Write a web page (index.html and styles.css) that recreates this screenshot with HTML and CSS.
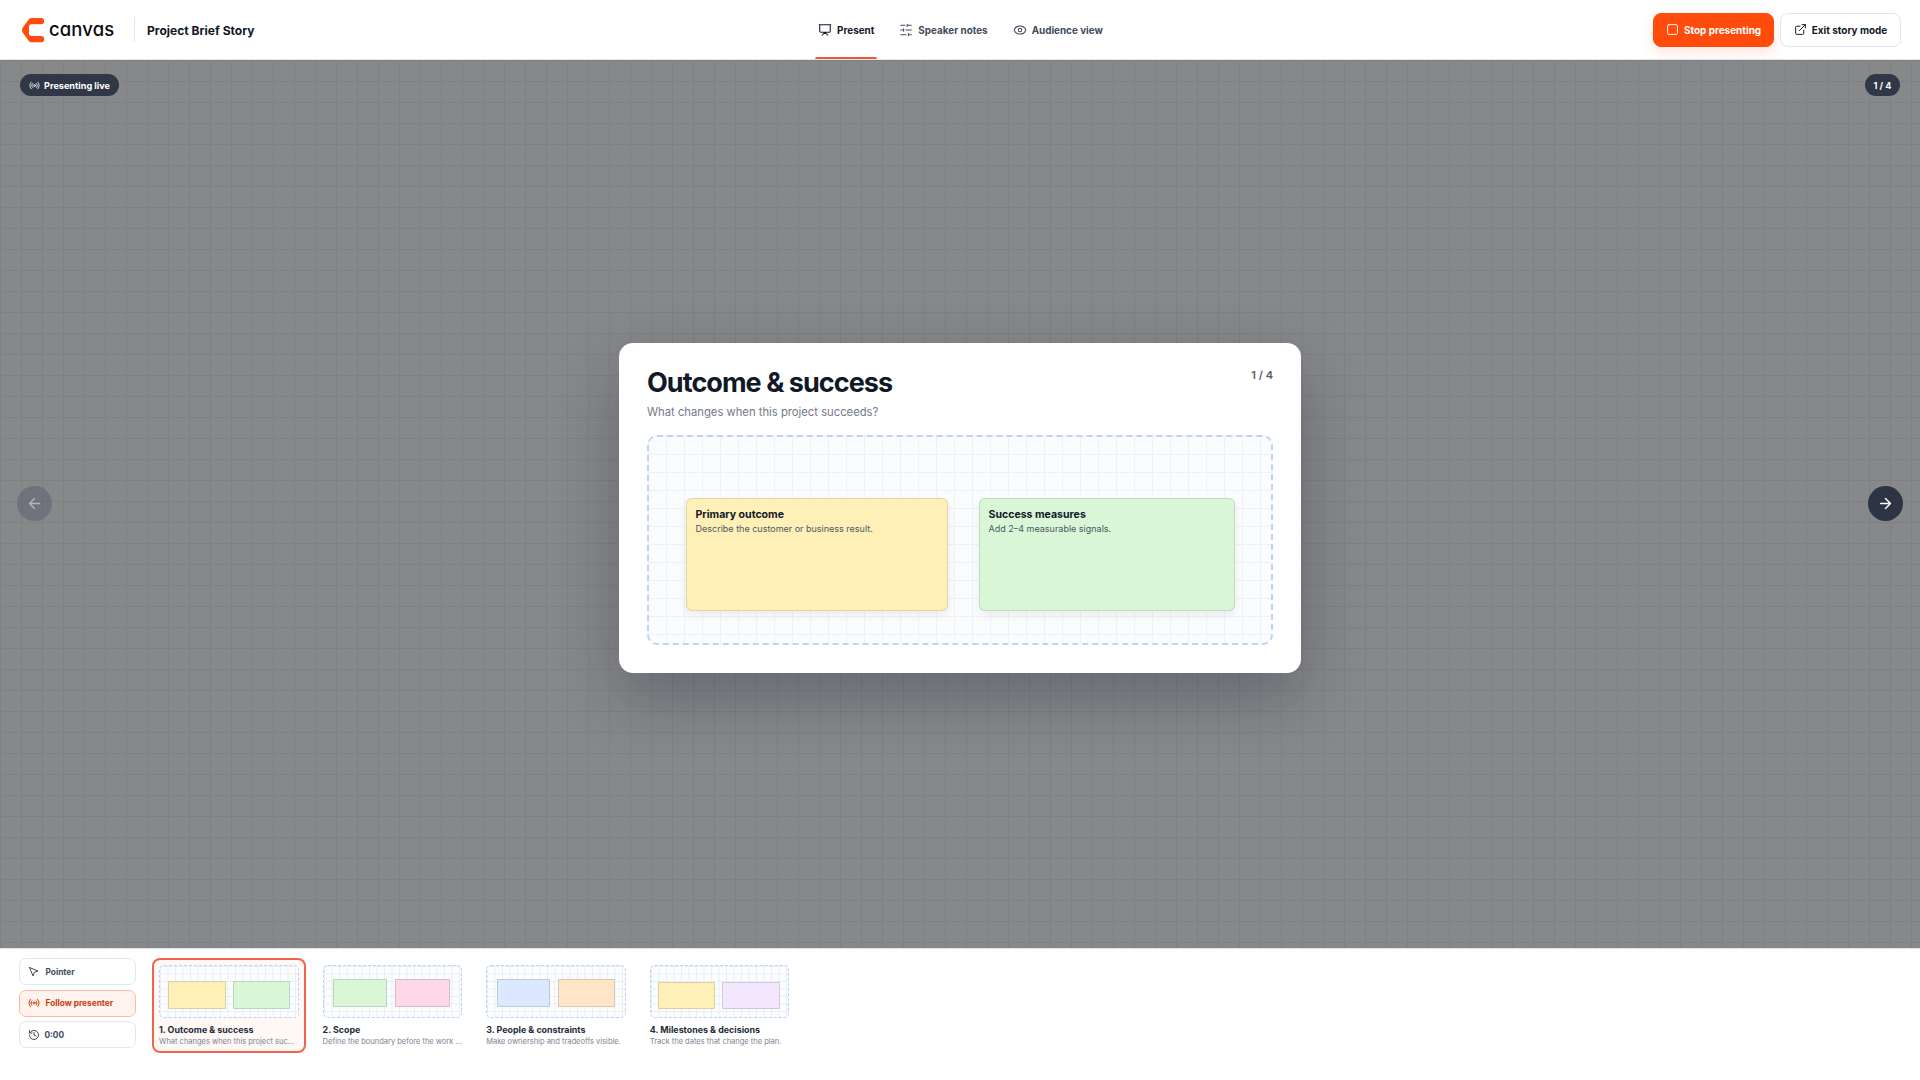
FILE: index.html
```html
<!DOCTYPE html>
<html lang="en">
<head>
<meta charset="utf-8">
<title>Project Brief Story</title>
<link rel="stylesheet" href="styles.css">
</head>
<body>
<svg class="sprite" aria-hidden="true">
  <symbol id="live" viewBox="0 0 24 24"><circle cx="12" cy="12" r="2"/><path d="M4.9 19.1C1 15.2 1 8.8 4.9 4.9M7.8 16.2c-2.3-2.3-2.3-6.1 0-8.5M16.2 7.8c2.3 2.3 2.3 6.1 0 8.5M19.1 4.9C23 8.8 23 15.1 19.1 19"/></symbol>
  <symbol id="screen" viewBox="0 0 24 24"><path d="M2 3h20M21 3v11a2 2 0 0 1-2 2H5a2 2 0 0 1-2-2V3M7 21l5-5 5 5"/></symbol>
  <symbol id="sliders" viewBox="0 0 24 24"><path d="M21 4h-7M10 4H3M21 12h-9M8 12H3M21 20h-5M12 20H3M14 2v4M8 10v4M16 18v4"/></symbol>
  <symbol id="eye" viewBox="0 0 24 24"><path d="M2.060 12.350a1 1 0 0 1 0-.7 10.750 10.750 0 0 1 19.880 0 1 1 0 0 1 0 .7 10.750 10.750 0 0 1-19.880 0"/><circle cx="12" cy="12" r="3"/></symbol>
  <symbol id="stop" viewBox="0 0 24 24"><rect x="3" y="3" width="18" height="18" rx="2"/></symbol>
  <symbol id="external" viewBox="0 0 24 24"><path d="M15 3h6v6M10 14 21 3M18 13v6a2 2 0 0 1-2 2H5a2 2 0 0 1-2-2V8a2 2 0 0 1 2-2h6"/></symbol>
  <symbol id="left" viewBox="0 0 24 24"><path d="m12 19-7-7 7-7M19 12H5"/></symbol>
  <symbol id="right" viewBox="0 0 24 24"><path d="M5 12h14M12 5l7 7-7 7"/></symbol>
  <symbol id="pointer" viewBox="0 0 24 24"><path d="m3 3 7.070 16.970 2.510-7.390 7.390-2.510L3 3z"/></symbol>
  <symbol id="history" viewBox="0 0 24 24"><path d="M3 12a9 9 0 1 0 9-9 9.750 9.750 0 0 0-6.740 2.740L3 8M3 3v5h5M12 7v5l4 2"/></symbol>
</svg>
<div class="app">
  <header class="topbar">
    <div class="brand">
      <svg class="mark" viewBox="0 0 24 26"><path d="M10.500 1H20a3.150 3.150 0 0 1 0 6.300H10.500Q8 7.300 8 9.800V16.500Q8 19 10.500 19H20a3.150 3.150 0 0 1 0 6.300H10.500Q9 25.300 8 24.200L1.600 15.600Q.2 13.150 1.600 10.700L8 2.100Q9 1 10.500 1Z"/></svg>
      <span class="wordmark">canvas</span>
      <span class="divider"></span>
      <h1>Project Brief Story</h1>
    </div>
    <nav class="tabs">
      <a class="tab active"><svg><use href="#screen"/></svg>Present</a>
      <a class="tab"><svg><use href="#sliders"/></svg>Speaker notes</a>
      <a class="tab"><svg><use href="#eye"/></svg>Audience view</a>
    </nav>
    <div class="actions">
      <button class="btn primary"><svg><use href="#stop"/></svg>Stop presenting</button>
      <button class="btn"><svg><use href="#external"/></svg>Exit story mode</button>
    </div>
  </header>
  <main class="stage">
    <span class="pill live"><svg><use href="#live"/></svg>Presenting live</span>
    <span class="pill count">1 / 4</span>
    <button class="arrow prev"><svg><use href="#left"/></svg></button>
    <article class="slide">
      <div class="slide-head">
        <div><h2>Outcome &amp; success</h2><p>What changes when this project succeeds?</p></div>
        <span>1 / 4</span>
      </div>
      <div class="board">
        <section class="note yellow"><h3>Primary outcome</h3><p>Describe the customer or business result.</p></section>
        <section class="note green"><h3>Success measures</h3><p>Add 2–4 measurable signals.</p></section>
      </div>
    </article>
    <button class="arrow next"><svg><use href="#right"/></svg></button>
  </main>
  <footer class="dock">
    <div class="tools">
      <button class="tool"><svg><use href="#pointer"/></svg>Pointer</button>
      <button class="tool on"><svg><use href="#live"/></svg>Follow presenter</button>
      <button class="tool time"><svg><use href="#history"/></svg>0:00</button>
    </div>
    <div class="scenes">
      <div class="scene current"><div class="thumb t1"><i class="yellow"></i><i class="green"></i></div><b>1. Outcome &amp; success</b><small>What changes when this project suc...</small></div>
      <div class="scene"><div class="thumb t2"><i class="green"></i><i class="pink"></i></div><b>2. Scope</b><small>Define the boundary before the work ...</small></div>
      <div class="scene"><div class="thumb t3"><i class="blue"></i><i class="orange"></i></div><b>3. People &amp; constraints</b><small>Make ownership and tradeoffs visible.</small></div>
      <div class="scene"><div class="thumb t4"><i class="yellow"></i><i class="purple"></i></div><b>4. Milestones &amp; decisions</b><small>Track the dates that change the plan.</small></div>
    </div>
  </footer>
</div>
</body>
</html>
```
FILE: styles.css
```css
* { box-sizing: border-box; }
body { margin: 0; font-family: Inter, "Liberation Sans", sans-serif; color: #111827; background: #fff; }
h1, h2, h3, p { margin: 0; }
button { font: inherit; color: inherit; }
svg { display: block; flex: none; fill: none; stroke: currentColor; stroke-width: 2; stroke-linecap: round; stroke-linejoin: round; }
.sprite { width: 0; height: 0; position: absolute; }
.app { height: 1080px; display: grid; grid-template-rows: 60px 888px 132px; overflow: hidden; }

.topbar { display: grid; grid-template-columns: 1fr auto 1fr; align-items: center; padding: 0 19px 0 20px; border-bottom: 1px solid #e3e6eb; }
.brand { display: flex; align-items: center; }
.mark { width: 24px; height: 26px; margin-left: 1px; fill: #ff4b0b; stroke: none; }
.wordmark { width: 66px; height: 24px; margin-left: 4px; margin-top: -1px; font-size: 18.500px; line-height: 24px; font-weight: 500; letter-spacing: .1px; font-feature-settings: "cv11"; color: #0c0c0e; }
.divider { width: 1px; height: 25px; background: #e2e5ea; margin: 0 12px 0 19px; }
h1 { font-size: 12.050px; line-height: 18px; font-weight: 700; padding-top: 2px; }
.tabs { display: flex; align-self: stretch; gap: 19px; }
.tab { position: relative; display: flex; align-items: center; gap: 5px; padding: 0 3px; font-size: 9.900px; font-weight: 700; color: #414b5c; }
.tab svg { width: 14px; height: 14px; stroke-width: 1.800; }
.tab.active { color: #111827; }
.tab.active::after { content: ""; position: absolute; left: 0; right: 0; bottom: 0; height: 2px; background: #ea5a37; border-radius: 2px 2px 0 0; }
.actions { display: flex; justify-content: flex-end; gap: 6px; }
.btn { display: flex; align-items: center; justify-content: center; gap: 5px; height: 34px; width: 121px; padding: 0; border: 1px solid #e1e6ed; border-radius: 8px; background: #fff; font-size: 9.950px; font-weight: 700; }
.btn svg { width: 13px; height: 13px; stroke-width: 1.800; }
.btn.primary { border-color: #ff4b0b; background: #ff4b0b; color: #fff; box-shadow: 0 6px 14px rgba(255, 75, 11, .14); }

.stage { position: relative; display: flex; align-items: center; justify-content: center; padding-top: 7px;
  background-color: #87888a;
  background-image: linear-gradient(90deg, #7f8083 1px, transparent 1px), linear-gradient(#7f8083 1px, transparent 1px);
  background-size: 21px 21px; }
.pill { position: absolute; top: 14px; display: flex; align-items: center; justify-content: center; gap: 4px; height: 22px; border-radius: 11px; background: #303746; color: #fff; font-size: 9.100px; font-weight: 700; }
.pill svg { width: 11px; height: 11px; }
.pill.live { left: 20px; width: 99px; }
.pill.count { right: 20px; width: 35px; }
.arrow { position: absolute; top: 426px; display: grid; place-items: center; width: 35px; height: 35px; padding: 0; border: 0; border-radius: 50%; background: #2d3444; color: #fff; }
.arrow svg { width: 17px; height: 17px; }
.prev { left: 17px; opacity: .38; background: #4c5266; }
.next { right: 17px; }
.slide { width: 682px; height: 330px; padding: 27px 28px 28px; border-radius: 14px; background: #fff; box-shadow: 0 24px 64px rgba(15, 23, 42, .28); }
.slide-head { display: flex; justify-content: space-between; height: 65px; }
h2 { margin-top: -1px; font-size: 27px; line-height: 27px; letter-spacing: -.95px; font-weight: 700; }
.slide-head p { margin-top: 9px; font-size: 11.250px; line-height: 15px; color: #737987; }
.slide-head span { margin-top: -2px; font-size: 11px; line-height: 14px; font-weight: 600; color: #555d6b; }
.board { display: flex; height: 210px; padding: 61px 36px 0 36.500px; gap: 31px; border: 2px dashed #bfd2fc; border-radius: 10px;
  background: linear-gradient(90deg, #eff1f4 1px, transparent 1px) -1px 0 / 18px 18px, linear-gradient(#eff1f4 1px, transparent 1px) 0 -1px / 18px 18px #fbfcfe; }
.note { height: 113px; padding: 9px; border: 1px solid rgba(70, 90, 70, .17); border-radius: 6px; box-shadow: 0 4px 9px rgba(15, 23, 42, .07); }
.note.yellow { width: 262px; }
.note.green { width: 256px; }
.yellow { background: #fef0b7; }
.green { background: #d9f6d7; }
.pink { background: #fdd8e6; }
.blue { background: #dbe8fd; }
.orange { background: #ffe5c7; }
.purple { background: #f4e6fd; }
h3 { font-size: 10.550px; line-height: 13px; font-weight: 700; }
.note p { margin-top: 2px; font-size: 9px; line-height: 12px; color: #4d5862; }

.dock { display: flex; align-items: flex-start; padding: 9px 19px; border-top: 1px solid #dfe2e6; background: #fff; }
.tools { display: flex; flex-direction: column; gap: 4.500px; width: 117px; margin-right: 16px; }
.tool { display: flex; align-items: center; gap: 6px; height: 27px; padding: 0 7.500px; border: 1px solid #e3e8ef; border-radius: 7px; background: #fff; color: #414b5c; font-size: 8.300px; font-weight: 700; }
.tool svg { width: 12px; height: 12px; }
.tool.on { background: #fff3ed; border-color: #ffb9a1; color: #c93b12; }
.tool.time { gap: 5px; }
.scenes { display: flex; gap: 10px; }
.scene { width: 153.600px; height: 95px; padding: 5px; border: 2px solid transparent; border-radius: 8px; }
.scene.current { border-color: #f3634a; background: #fff8f5; }
.thumb { display: flex; align-items: flex-start; width: 139.600px; height: 53px; border: 1px dashed #bacffc; border-radius: 5px;
  background: linear-gradient(90deg, #e9eef4 1px, transparent 1px) 0 0 / 7.500px 7.500px, linear-gradient(#e9eef4 1px, transparent 1px) 0 0 / 7.500px 7.500px #fbfdff; }
.thumb i { height: 28px; border: 1px solid rgba(70, 80, 90, .2); border-radius: 1px; }
.t1 { padding: 15px 8px; gap: 7px; }
.t1 i:first-child { width: 58px; } .t1 i:last-child { width: 57px; }
.t2 { padding: 13px 9.500px; gap: 8px; }
.t2 i:first-child { width: 54px; } .t2 i:last-child { width: 55px; }
.t3 { padding: 13px 9.500px; gap: 8px; }
.t3 i:first-child { width: 53px; } .t3 i:last-child { width: 58px; }
.t4 { padding: 16px 7.500px; gap: 7px; }
.t4 i { height: 27px; width: 57px; } .t4 i:last-child { width: 58px; }
.scene b { display: block; margin-top: 6px; font-size: 8.900px; line-height: 12px; color: #232b3b; font-weight: 700; }
.scene small { display: block; font-size: 7.500px; line-height: 11px; color: #7c8391; white-space: nowrap; }
```
